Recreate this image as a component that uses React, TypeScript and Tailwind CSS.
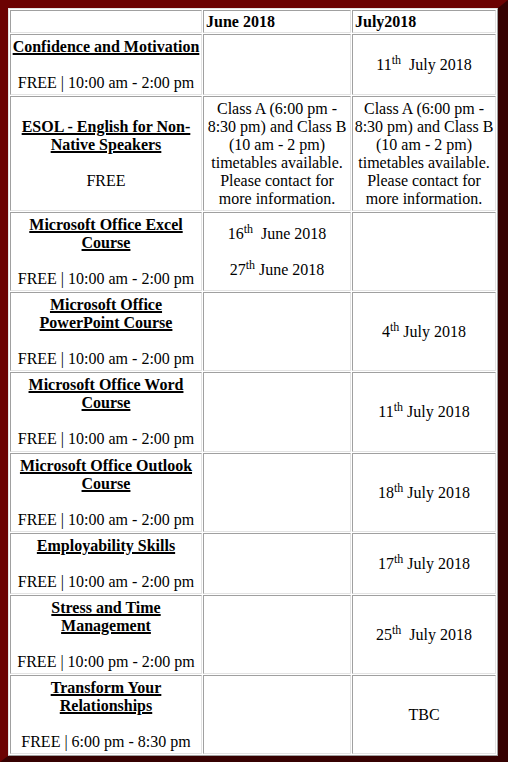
import React from "react"

type Row = {
  title: string
  time: string
  june?: React.ReactNode
  july?: React.ReactNode
  h: string
}

const classInfo = (
  <>Class A (6:00 pm - 8:30 pm) and Class B (10 am - 2 pm) timetables available. Please contact for more information.</>
)

const date = (day: string, rest: string, wide = false) => (
  <>
    {day}
    <sup>th</sup>
    {wide ? "\u00a0 " : " "}
    {rest}
  </>
)

const rows: Row[] = [
  { title: "Confidence and Motivation", time: "FREE | 10:00 am - 2:00 pm", july: date("11", "July 2018", true), h: "h-[61px]" },
  { title: "ESOL - English for Non-Native Speakers", time: "FREE", june: classInfo, july: classInfo, h: "h-[115px]" },
  {
    title: "Microsoft Office Excel Course",
    time: "FREE | 10:00 am - 2:00 pm",
    june: (
      <>
        {date("16", "June 2018", true)}
        <br />
        <br />
        {date("27", "June 2018")}
      </>
    ),
    h: "h-[79px]",
  },
  { title: "Microsoft Office PowerPoint Course", time: "FREE | 10:00 am - 2:00 pm", july: date("4", "July 2018"), h: "h-[79px]" },
  { title: "Microsoft Office Word Course", time: "FREE | 10:00 am - 2:00 pm", july: date("11", "July 2018"), h: "h-[80px]" },
  { title: "Microsoft Office Outlook Course", time: "FREE | 10:00 am - 2:00 pm", july: date("18", "July 2018"), h: "h-[79px]" },
  { title: "Employability Skills", time: "FREE | 10:00 am - 2:00 pm", july: date("17", "July 2018"), h: "h-[61px]" },
  { title: "Stress and Time Management", time: "FREE | 10:00 pm - 2:00 pm", july: date("25", "July 2018", true), h: "h-[79px]" },
  { title: "Transform Your Relationships", time: "FREE | 6:00 pm - 8:30 pm", july: <>TBC</>, h: "h-[79px]" },
]

// inset look of an old border=1 table cell
const cell =
  "border border-t-[#a0a0a0] border-l-[#a0a0a0] border-b-[#e3e3e3] border-r-[#e3e3e3] p-px align-middle text-center"

export default function App() {
  return (
    <div className="w-[508px] bg-white pb-1 font-[family-name:Liberation_Serif] text-[16px] leading-[normal] text-black">
      <div className="border-t-[8px] border-l-[8px] border-r-[10px] border-b-[6px] border-t-[#6c0202] border-l-[#6c0202] border-r-[#360101] border-b-[#360101] bg-white">
        <table className="w-[490px] table-fixed border-separate border-spacing-px border border-t-[#e3e3e3] border-l-[#e3e3e3] border-b-[#a0a0a0] border-r-[#a0a0a0]">
          <colgroup>
            <col className="w-[192px]" />
            <col className="w-[148px]" />
            <col className="w-[144px]" />
          </colgroup>
          <thead>
            <tr>
              <th className={cell + " h-[23px]"}></th>
              <th className={cell + " h-[23px] !text-left pl-[2px] font-bold"}>June 2018</th>
              <th className={cell + " h-[23px] !text-left pl-[2px] font-bold"}>July2018</th>
            </tr>
          </thead>
          <tbody>
            {rows.map((r) => (
              <tr key={r.title}>
                <td className={cell + " " + r.h}>
                  <p className="font-bold underline decoration-[1.5px]">{r.title}</p>
                  <p>&nbsp;</p>
                  <p>{r.time}</p>
                </td>
                <td className={cell + " " + r.h}>{r.june}</td>
                <td className={cell + " " + r.h}>{r.july}</td>
              </tr>
            ))}
          </tbody>
        </table>
      </div>
    </div>
  )
}
